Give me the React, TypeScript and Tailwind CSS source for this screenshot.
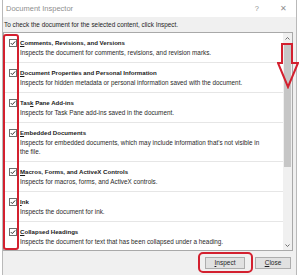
import React from 'react';

type Item = { pre: string; key: string; post: string; desc: React.ReactNode };

const items: Item[] = [
  { pre: '', key: 'C', post: 'omments, Revisions, and Versions', desc: 'Inspects the document for comments, revisions, and revision marks.' },
  { pre: '', key: 'D', post: 'ocument Properties and Personal Information', desc: 'Inspects for hidden metadata or personal information saved with the document.' },
  { pre: 'Tas', key: 'k', post: ' Pane Add-ins', desc: 'Inspects for Task Pane add-ins saved in the document.' },
  {
    pre: '',
    key: 'E',
    post: 'mbedded Documents',
    desc: (
      <>
        Inspects for embedded documents, which may include information that's not visible in
        <br />
        the file.
      </>
    ),
  },
  { pre: '', key: 'M', post: 'acros, Forms, and ActiveX Controls', desc: 'Inspects for macros, forms, and ActiveX controls.' },
  { pre: '', key: 'I', post: 'nk', desc: 'Inspects the document for ink.' },
  { pre: '', key: 'C', post: 'ollapsed Headings', desc: 'Inspects the document for text that has been collapsed under a heading.' },
];

const CheckBox = () => (
  <svg width="8" height="8" viewBox="0 0 8 8" className="mt-[1px] shrink-0">
    <rect x="0.5" y="0.5" width="7" height="7" fill="#fff" stroke="#6d6d6d" />
    <polyline points="1.8,4.1 3.3,5.6 6.2,2.4" fill="none" stroke="#2b2b2b" strokeWidth="1" />
  </svg>
);

const Chevron = ({ up }: { up?: boolean }) => (
  <svg width="5" height="3" viewBox="0 0 5 3">
    <polyline points={up ? '0.5,2.5 2.5,0.5 4.5,2.5' : '0.5,0.5 2.5,2.5 4.5,0.5'} fill="none" stroke="#606060" strokeWidth="0.9" />
  </svg>
);

export default function App() {
  return (
    <div className="relative w-[300px] h-[275px] overflow-hidden bg-white font-['Liberation_Sans',Arial,sans-serif]">
      <div className="ml-[2px] w-[295px] h-full flex flex-col border-l border-r border-[#b9b9b9] bg-[#f0f0f0]">
        {/* title bar */}
        <div className="h-[17px] shrink-0 flex items-center bg-white pl-[3px] pr-[9px] text-[7.5px] text-[#8f8f8f]">
          <span>Document Inspector</span>
          <span className="ml-auto">?</span>
          <span className="ml-[21px] text-[8px]">✕</span>
        </div>

        <div className="h-[15px] shrink-0 flex items-center pl-[1px] text-[6.4px] text-[#1e1e1e]">
          To check the document for the selected content, click Inspect.
        </div>

        {/* list box */}
        <div className="mr-[3px] h-[219px] shrink-0 flex border border-[#a9a9a9] bg-white">
          <div className="flex-1 overflow-hidden">
            {items.map((it, i) => (
              <div key={i} className="flex gap-[3px] pl-[5px] pt-[5px] pb-[5px] border-b border-[#e6e6e6]">
                <CheckBox />
                <div className="flex flex-col">
                  <span className="leading-[10px] text-[6.1px] font-bold text-[#1a1a1a] whitespace-nowrap">
                    {it.pre}
                    <span className="underline">{it.key}</span>
                    {it.post}
                  </span>
                  <span className="leading-[9px] text-[6.35px] text-[#2a2a2a] whitespace-nowrap">{it.desc}</span>
                </div>
              </div>
            ))}
          </div>
          <div className="w-[9px] flex flex-col items-center bg-[#f0f0f0]">
            <div className="h-[10px] flex items-center justify-center">
              <Chevron up />
            </div>
            <div className="mt-[2px] w-[7px] h-[122px] bg-[#c6c6c6]" />
            <div className="flex-1" />
            <div className="h-[10px] flex items-center justify-center">
              <Chevron />
            </div>
          </div>
        </div>

        {/* buttons */}
        <div className="mt-[6px] flex justify-end gap-[10px] pr-[5px] text-[6.5px] text-[#1e1e1e]">
          <button className="w-[40px] h-[12px] flex items-center justify-center border border-[#adadad] bg-[#e1e1e1]">
            <span className="underline">I</span>nspect
          </button>
          <button className="w-[36px] h-[12px] flex items-center justify-center border border-[#adadad] bg-[#e1e1e1]">
            <span className="underline">C</span>lose
          </button>
        </div>
      </div>

      {/* red annotations */}
      <div className="absolute left-[3px] top-[34px] w-[16px] h-[216px] rounded-[3px] border-2 border-[#d3202f]" />
      <div className="absolute left-[198px] top-[252px] w-[55px] h-[21px] rounded-[5px] border-2 border-[#d3202f]" />
      <svg className="absolute left-[277px] top-[43px]" width="22" height="46" viewBox="0 0 22 46">
        <polygon points="5,1 15,1 15,20 21,20 11,44 1,20 5,20" fill="none" stroke="#d3202f" strokeWidth="2" strokeLinejoin="miter" />
      </svg>
    </div>
  );
}
